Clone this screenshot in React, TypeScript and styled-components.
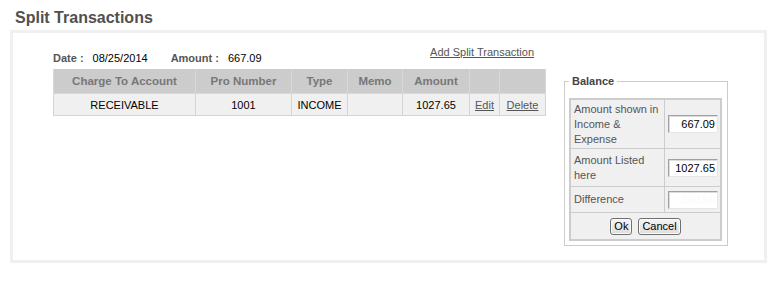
import React from "react";
import styled, { createGlobalStyle } from "styled-components";

const Global = createGlobalStyle`
  html, body { margin: 0; padding: 0; background: #fff; }
  body { font-family: "Liberation Sans", Arial, sans-serif; font-size: 11px; color: #000; }
`;

const Page = styled.div`
  padding: 8px 16px 0 10px;
  width: 757px;
`;

const Title = styled.h2`
  margin: 0 0 2px 5px;
  font-size: 16px;
  line-height: 20px;
  font-weight: bold;
  color: #505050;
`;

const Box = styled.div`
  box-sizing: border-box;
  width: 757px;
  border: 3px solid #f0f0f0;
  padding: 0 0 14px 40px;
  display: flex;
  align-items: flex-start;
`;

const LeftCol = styled.div`
  width: 492px;
  padding-top: 13px;
`;

const TopRow = styled.div`
  display: flex;
  justify-content: space-between;
  align-items: flex-start;
  padding-right: 11px;
`;

const InfoLine = styled.div`
  margin-top: 5px;
  line-height: 14px;
  display: flex;
`;

const Label = styled.span`
  font-weight: bold;
  color: #555;
  margin-right: 9px;
`;

const Value = styled.span<{ $gap?: number }>`
  color: #000;
  margin-right: ${(p) => p.$gap ?? 0}px;
`;

const Link = styled.a`
  color: #555;
  text-decoration: underline;
  line-height: 13px;
  cursor: pointer;
`;

const Grid = styled.table`
  margin-top: 4px;
  width: 492px;
  border-collapse: collapse;
  table-layout: fixed;
`;

const Th = styled.th<{ $w: number }>`
  width: ${(p) => p.$w - 1}px;
  height: 24px;
  padding: 0;
  background: #cccccc;
  border: 1px solid #d8d8d8;
  border-top: none;
  color: #777;
  font-size: 11.5px;
  font-weight: bold;
  text-align: center;
`;

const Td = styled.td`
  height: 21px;
  padding: 0;
  background: #f0f0f0;
  border: 1px solid #d4d4d4;
  text-align: center;
  font-size: 11px;
  color: #000;
`;

const CellLink = styled.a`
  color: #555;
  text-decoration: underline;
  cursor: pointer;
`;

const Fieldset = styled.fieldset`
  margin: 41px 0 0 19px;
  padding: 10px 5px 4px 4px;
  border: 1px solid #cccccc;
  min-width: 0;
`;

const Legend = styled.legend`
  padding: 0 3px;
  font-weight: bold;
  font-size: 11px;
  line-height: 14px;
  color: #444;
`;

const BalanceTable = styled.table`
  width: 153px;
  border-collapse: collapse;
  border: 2px solid #cccccc;
  background: #f0f0f0;
`;

const BLabel = styled.td<{ $h: number }>`
  width: 88px;
  height: ${(p) => p.$h}px;
  padding: 0 3px;
  border: 1px solid #cccccc;
  color: #555;
  font-size: 11px;
  line-height: 15px;
  text-align: left;
  vertical-align: middle;
`;

const BValue = styled.td`
  padding: 0 2px 0 3px;
  border: 1px solid #cccccc;
  vertical-align: middle;
`;

const Input = styled.input<{ $faint?: boolean }>`
  box-sizing: border-box;
  display: block;
  width: 50px;
  height: 18px;
  margin: 0;
  padding: 0 2px 0 2px;
  border: 1px solid;
  border-color: #a0a0a0 #e6e6e6 #e6e6e6 #a0a0a0;
  box-shadow: inset 1px 1px 0 #dcdcdc;
  background: #fff;
  font-family: "Liberation Sans", Arial, sans-serif;
  font-size: 11px;
  text-align: right;
  color: ${(p) => (p.$faint ? "#fafafa" : "#000")};
  outline: none;
`;

const ButtonCell = styled.td`
  height: 26px;
  padding: 0;
  border: 1px solid #cccccc;
  text-align: center;
  vertical-align: middle;
`;

const ButtonRow = styled.div`
  display: flex;
  justify-content: center;
  gap: 6px;
`;

const Btn = styled.button`
  box-sizing: border-box;
  height: 17px;
  padding: 0 3px;
  margin: 0;
  border: 1px solid #707070;
  border-radius: 3px;
  background: linear-gradient(#f4f4f4, #dedede);
  font-family: "Liberation Sans", Arial, sans-serif;
  font-size: 11px;
  line-height: 15px;
  color: #000;
  box-shadow: inset 0 0 0 1px #fcfcfc;
`;

const columns = [
  { label: "Charge To Account", w: 142 },
  { label: "Pro Number", w: 96 },
  { label: "Type", w: 56 },
  { label: "Memo", w: 55 },
  { label: "Amount", w: 67 },
  { label: "", w: 30 },
  { label: "", w: 46 },
];

export default function App() {
  return (
    <>
      <Global />
      <Page>
        <Title>Split Transactions</Title>
        <Box>
          <LeftCol>
            <TopRow>
              <InfoLine>
                <Label>Date :</Label>
                <Value $gap={23}>08/25/2014</Value>
                <Label>Amount :</Label>
                <Value>667.09</Value>
              </InfoLine>
              <Link>Add Split Transaction</Link>
            </TopRow>
            <Grid>
              <thead>
                <tr>
                  {columns.map((c, i) => (
                    <Th key={i} $w={c.w}>
                      {c.label}
                    </Th>
                  ))}
                </tr>
              </thead>
              <tbody>
                <tr>
                  <Td>RECEIVABLE</Td>
                  <Td>1001</Td>
                  <Td>INCOME</Td>
                  <Td></Td>
                  <Td>1027.65</Td>
                  <Td>
                    <CellLink>Edit</CellLink>
                  </Td>
                  <Td>
                    <CellLink>Delete</CellLink>
                  </Td>
                </tr>
              </tbody>
            </Grid>
          </LeftCol>
          <Fieldset>
            <Legend>Balance</Legend>
            <BalanceTable>
              <tbody>
                <tr>
                  <BLabel $h={48}>Amount shown in Income &amp; Expense</BLabel>
                  <BValue>
                    <Input readOnly value="667.09" />
                  </BValue>
                </tr>
                <tr>
                  <BLabel $h={37}>Amount Listed here</BLabel>
                  <BValue>
                    <Input readOnly value="1027.65" />
                  </BValue>
                </tr>
                <tr>
                  <BLabel $h={25}>Difference</BLabel>
                  <BValue>
                    <Input readOnly $faint value="-360.56" />
                  </BValue>
                </tr>
                <tr>
                  <ButtonCell colSpan={2}>
                    <ButtonRow>
                      <Btn>Ok</Btn>
                      <Btn>Cancel</Btn>
                    </ButtonRow>
                  </ButtonCell>
                </tr>
              </tbody>
            </BalanceTable>
          </Fieldset>
        </Box>
      </Page>
    </>
  );
}
